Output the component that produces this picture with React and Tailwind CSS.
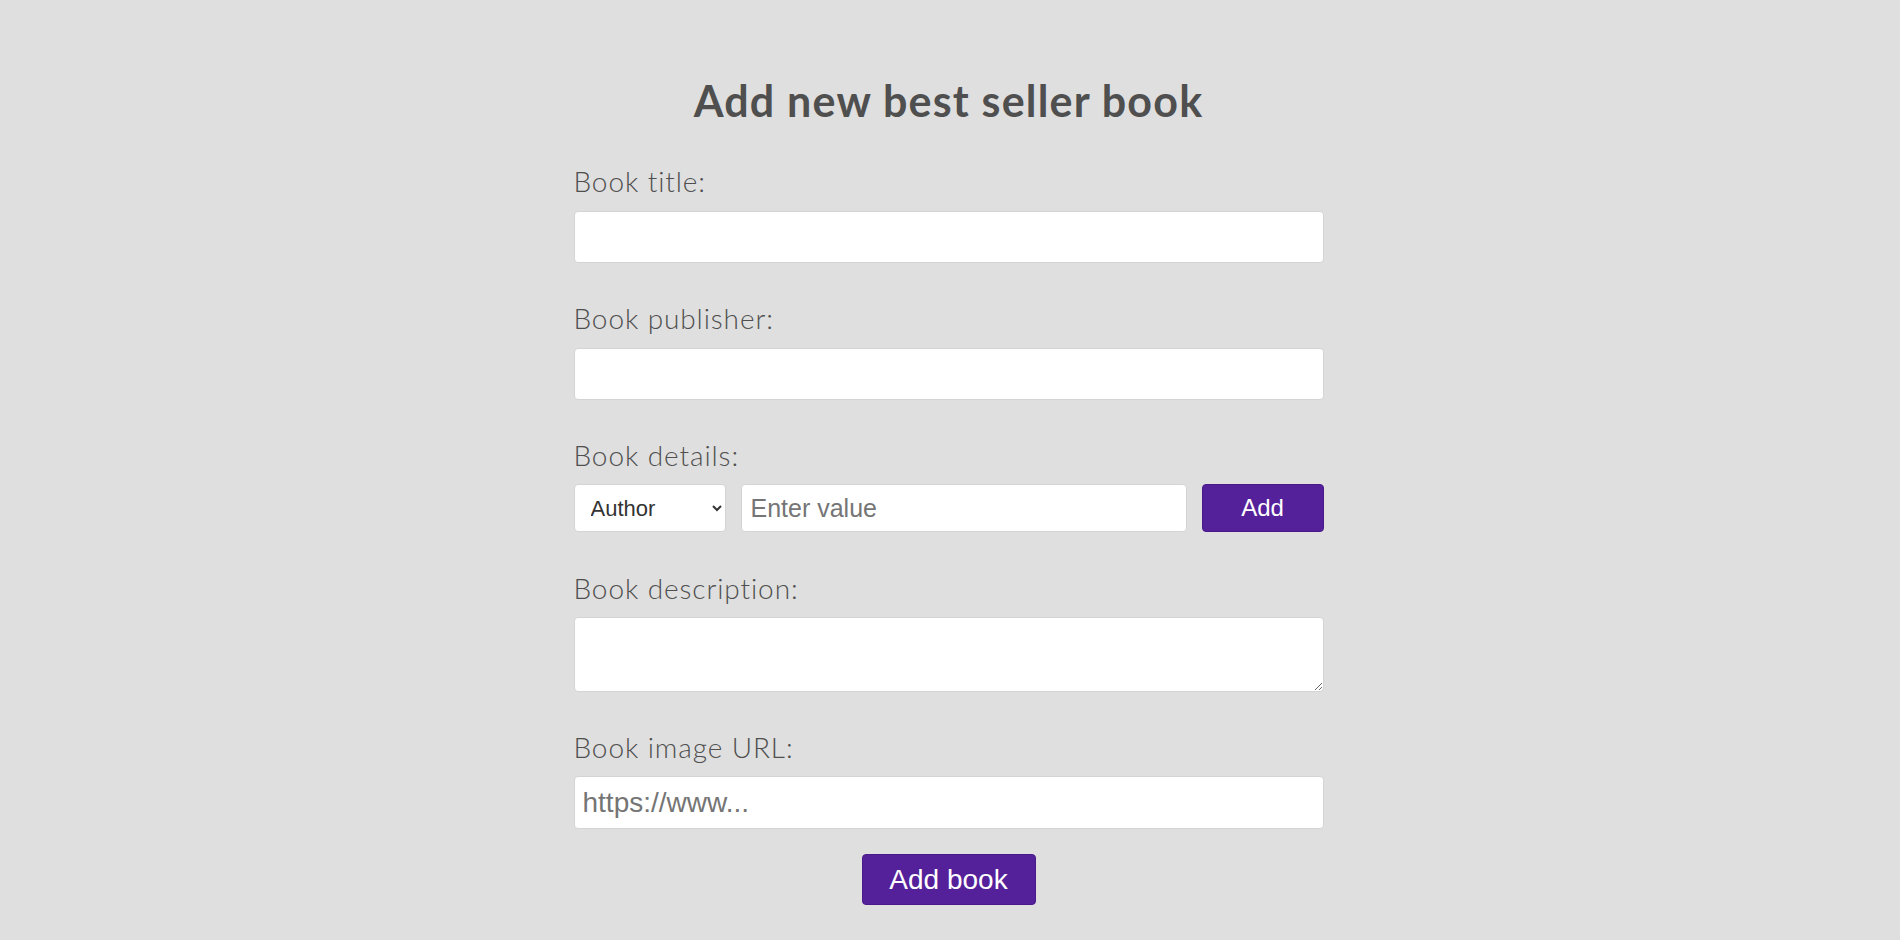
import { useState } from "react";

const labelCls =
  "block text-[28px] leading-[34px] font-light tracking-[0.9px] text-[#4f4f4f] font-['Lato',sans-serif]";
const fieldCls =
  "w-full bg-white border border-[#d4d4d4] rounded-[4px] outline-none font-['Liberation_Sans',Arial,sans-serif] placeholder:text-[#757575]";

export default function App() {
  const [title, setTitle] = useState("");
  const [publisher, setPublisher] = useState("");
  const [detailKey, setDetailKey] = useState("author");
  const [detailValue, setDetailValue] = useState("");
  const [description, setDescription] = useState("");
  const [imageUrl, setImageUrl] = useState("");

  return (
    <div className="min-h-screen bg-[#dfdfdf]">
      <form
        className="w-[750px] mx-auto pt-[76px] pr-[3px] box-content"
        onSubmit={(e) => e.preventDefault()}
      >
        <h1 className="text-center text-[43px] leading-[50px] font-bold tracking-[1.2px] text-[#4f4f4f] font-['Lato',sans-serif]">
          Add new best seller book
        </h1>

        <label className={`${labelCls} mt-[38px]`}>Book title:</label>
        <input
          type="text"
          value={title}
          onChange={(e) => setTitle(e.target.value)}
          className={`${fieldCls} h-[52px] mt-[13px] px-[9px] text-[24px]`}
        />

        <label className={`${labelCls} mt-[38px]`}>Book publisher:</label>
        <input
          type="text"
          value={publisher}
          onChange={(e) => setPublisher(e.target.value)}
          className={`${fieldCls} h-[52px] mt-[13px] px-[9px] text-[24px]`}
        />

        <label className={`${labelCls} mt-[38px]`}>Book details:</label>
        <div className="flex gap-[15px] mt-[12px] h-[48px]">
          <select
            value={detailKey}
            onChange={(e) => setDetailKey(e.target.value)}
            className="w-[152px] h-full bg-white border border-[#d4d4d4] rounded-[4px] pl-[12px] pr-[6px] text-[22px] text-[#333333] outline-none font-['Liberation_Sans',Arial,sans-serif]"
          >
            <option value="author">Author</option>
            <option value="year">Year</option>
            <option value="pages">Pages</option>
          </select>
          <input
            type="text"
            value={detailValue}
            onChange={(e) => setDetailValue(e.target.value)}
            placeholder="Enter value"
            className={`${fieldCls} flex-1 h-full px-[9px] text-[25px]`}
          />
          <button
            type="button"
            className="w-[122px] h-full bg-[#55219b] text-white rounded-[4px] border border-[#4a1a8a] text-[24px] font-['Liberation_Sans',Arial,sans-serif] cursor-pointer"
          >
            Add
          </button>
        </div>

        <label className={`${labelCls} mt-[39px]`}>Book description:</label>
        <textarea
          value={description}
          onChange={(e) => setDescription(e.target.value)}
          className={`${fieldCls} block h-[75px] mt-[12px] px-[9px] py-[6px] text-[22px]`}
        />

        <label className={`${labelCls} mt-[38px]`}>Book image URL:</label>
        <input
          type="text"
          value={imageUrl}
          onChange={(e) => setImageUrl(e.target.value)}
          placeholder="https://www..."
          className={`${fieldCls} h-[53px] mt-[12px] px-[8px] text-[28px]`}
        />

        <div className="flex justify-center mt-[25px]">
          <button
            type="submit"
            className="w-[174px] h-[51px] bg-[#55219b] text-white rounded-[4px] border border-[#4a1a8a] text-[28px] font-['Liberation_Sans',Arial,sans-serif] cursor-pointer"
          >
            Add book
          </button>
        </div>
      </form>
    </div>
  );
}
